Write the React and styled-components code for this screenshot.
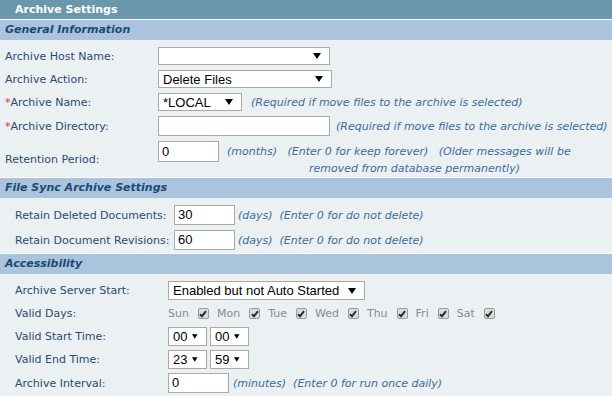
import styled, { createGlobalStyle } from "styled-components";

const GlobalStyle = createGlobalStyle`
  body {
    margin: 0;
    background: #ebf0f3;
    font-family: "DejaVu Sans", Verdana, sans-serif;
  }
`;

const Page = styled.div`
  width: 612px;
  background: #ebf0f3;
`;

const TitleBar = styled.div`
  height: 19px;
  line-height: 19px;
  padding-left: 15px;
  background: #6b97ad;
  color: #fff;
  font-weight: bold;
  font-size: 11px;
`;

const SectionHeader = styled.div`
  height: 20px;
  line-height: 20px;
  border-top: 1px solid #fff;
  padding-left: 5px;
  background: #a9c4dc;
  color: #1c4a74;
  font-weight: bold;
  font-style: italic;
  font-size: 11px;
`;

const Section = styled.div`
  display: grid;
  grid-template-columns: ${(p) => p.$labelCol}px 1fr;
  row-gap: ${(p) => p.$gap}px;
  padding: 7px 0 ${(p) => p.$bottom}px;
`;

const Label = styled.div`
  padding-left: ${(p) => p.$indent}px;
  align-self: center;
  font-size: 11px;
  color: #2a4c6c;
  white-space: nowrap;
`;

const Req = styled.span`
  color: #e0302a;
`;

const Cell = styled.div`
  display: flex;
  align-items: ${(p) => (p.$top ? "flex-start" : "center")};
`;

const Note = styled.span`
  margin-left: ${(p) => p.$ml ?? 8}px;
  font-size: 11px;
  font-style: italic;
  color: #3d6c98;
  white-space: nowrap;
`;

const NoteBlock = styled.div`
  margin: 2px 0 0 8px;
  font-size: 11px;
  font-style: italic;
  color: #3d6c98;
  line-height: 17px;
  white-space: nowrap;
`;

const NoteLine = styled.div`
  padding-left: ${(p) => p.$indent || 0}px;
`;

const SelectBox = styled.div`
  box-sizing: border-box;
  display: inline-flex;
  align-items: center;
  justify-content: ${(p) => (p.$small ? "flex-start" : "space-between")};
  gap: 5px;
  width: ${(p) => p.$w}px;
  height: ${(p) => p.$h || 18}px;
  padding: 0 8px 0 4px;
  background: #fff;
  border: 1px solid #a9a9a9;
  font-family: "Liberation Sans", Arial, sans-serif;
  font-size: 13px;
  color: #000;
  margin-right: ${(p) => p.$mr || 0}px;
`;

const Arrow = () => (
  <svg width="8" height="6" viewBox="0 0 8 6">
    <path d="M0 0H8L4 6Z" fill="#000" />
  </svg>
);

const SmallArrow = () => (
  <svg width="6" height="5" viewBox="0 0 6 5">
    <path d="M0 0H6L3 5Z" fill="#000" />
  </svg>
);

const TextInput = styled.div`
  box-sizing: border-box;
  width: ${(p) => p.$w}px;
  height: ${(p) => p.$h || 20}px;
  padding-left: 3px;
  line-height: ${(p) => (p.$h || 20) - 2}px;
  background: #fff;
  border: 1px solid #a9a9a9;
  font-family: "Liberation Sans", Arial, sans-serif;
  font-size: 13px;
  color: #000;
`;

const Days = styled.div`
  display: flex;
  align-items: center;
  height: 19px;
`;

const Day = styled.span`
  display: inline-flex;
  align-items: center;
`;

const DayName = styled.span`
  font-size: 11px;
  color: #8a8a8a;
  margin-right: 9px;
`;

const CheckBox = styled.span`
  box-sizing: border-box;
  display: inline-flex;
  align-items: center;
  justify-content: center;
  width: 11px;
  height: 11px;
  margin-right: 8px;
  border: 1px solid #9a9a9a;
  border-radius: 2px;
  background: #dcdcdc;
`;

const Check = () => (
  <svg width="8" height="8" viewBox="0 0 8 8">
    <path d="M1 4.2L3 6.3L7 1.2" stroke="#2a2a2a" strokeWidth="2" fill="none" />
  </svg>
);

const days = ["Sun", "Mon", "Tue", "Wed", "Thu", "Fri", "Sat"];

function Select({ value, w, h, mr, small }) {
  return (
    <SelectBox $w={w} $h={h} $mr={mr} $small={small}>
      <span>{value}</span>
      {small ? <SmallArrow /> : <Arrow />}
    </SelectBox>
  );
}

export default function App() {
  return (
    <Page>
      <GlobalStyle />
      <TitleBar>Archive Settings</TitleBar>

      <SectionHeader>General Information</SectionHeader>
      <Section $labelCol={158} $gap={5} $bottom={0}>
        <Label $indent={5}>Archive Host Name:</Label>
        <Cell>
          <Select value="" w={172} />
        </Cell>
        <Label $indent={5}>Archive Action:</Label>
        <Cell>
          <Select value="Delete Files" w={174} />
        </Cell>
        <Label $indent={5}>
          <Req>*</Req>Archive Name:
        </Label>
        <Cell>
          <Select value="*LOCAL" w={84} />
          <Note $ml={9}>(Required if move files to the archive is selected)</Note>
        </Cell>
        <Label $indent={5}>
          <Req>*</Req>Archive Directory:
        </Label>
        <Cell>
          <TextInput $w={172} />
          <Note $ml={6}>(Required if move files to the archive is selected)</Note>
        </Cell>
        <Label $indent={5}>Retention Period:</Label>
        <Cell $top>
          <TextInput $w={61} $h={21}>
            0
          </TextInput>
          <NoteBlock>
            <NoteLine>
              (months)&nbsp;&nbsp;&nbsp;(Enter 0 for keep forever)&nbsp;&nbsp;&nbsp;(Older
              messages will be
            </NoteLine>
            <NoteLine $indent={82}>removed from database permanently)</NoteLine>
          </NoteBlock>
        </Cell>
      </Section>

      <SectionHeader>File Sync Archive Settings</SectionHeader>
      <Section $labelCol={174} $gap={5} $bottom={3}>
        <Label $indent={15}>Retain Deleted Documents:</Label>
        <Cell>
          <TextInput $w={61}>30</TextInput>
          <Note $ml={3}>(days)&nbsp;&nbsp;(Enter 0 for do not delete)</Note>
        </Cell>
        <Label $indent={15}>Retain Document Revisions:</Label>
        <Cell>
          <TextInput $w={61}>60</TextInput>
          <Note $ml={3}>(days)&nbsp;&nbsp;(Enter 0 for do not delete)</Note>
        </Cell>
      </Section>

      <SectionHeader>Accessibility</SectionHeader>
      <Section $labelCol={168} $gap={4} $bottom={2}>
        <Label $indent={15}>Archive Server Start:</Label>
        <Cell>
          <Select value="Enabled but not Auto Started" w={197} h={19} />
        </Cell>
        <Label $indent={15}>Valid Days:</Label>
        <Days>
          {days.map((d) => (
            <Day key={d}>
              <DayName>{d}</DayName>
              <CheckBox>
                <Check />
              </CheckBox>
            </Day>
          ))}
        </Days>
        <Label $indent={15}>Valid Start Time:</Label>
        <Cell>
          <Select value="00" w={39} h={19} mr={3} small />
          <Select value="00" w={39} h={19} small />
        </Cell>
        <Label $indent={15}>Valid End Time:</Label>
        <Cell>
          <Select value="23" w={39} h={19} mr={3} small />
          <Select value="59" w={39} h={19} small />
        </Cell>
        <Label $indent={15}>Archive Interval:</Label>
        <Cell>
          <TextInput $w={61}>0</TextInput>
          <Note $ml={4}>(minutes)&nbsp;&nbsp;(Enter 0 for run once daily)</Note>
        </Cell>
      </Section>
    </Page>
  );
}
